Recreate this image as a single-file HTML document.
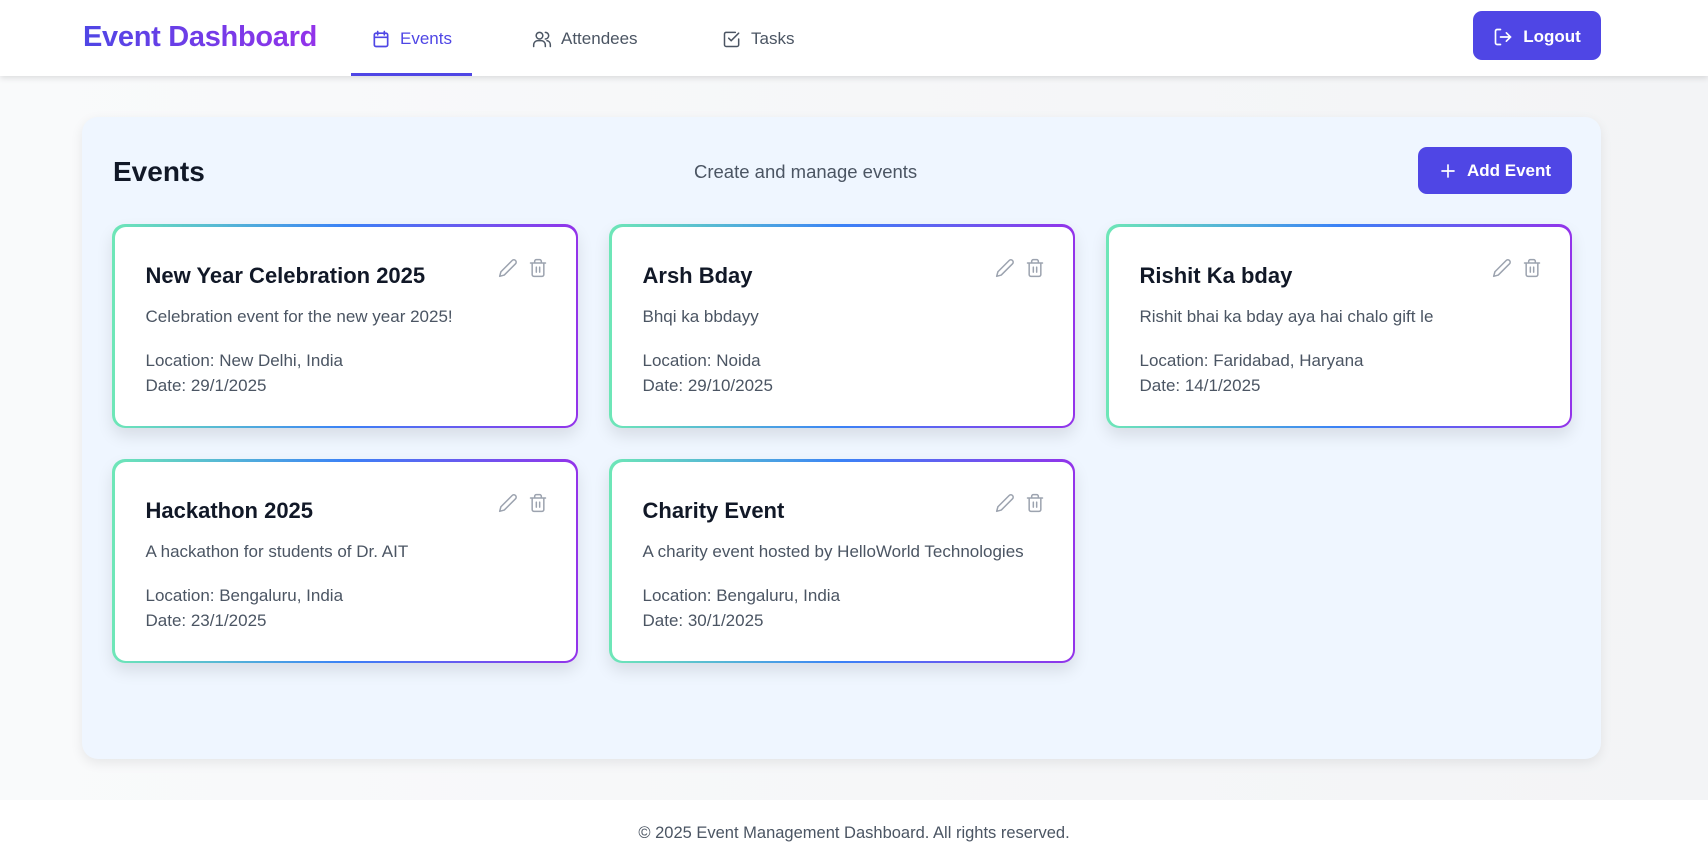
<!DOCTYPE html>
<html><head><meta charset="utf-8"><style>
*{box-sizing:border-box;margin:0;padding:0}
body{width:1708px;height:863px;overflow:hidden;font-family:"Liberation Sans",sans-serif;background:linear-gradient(90deg,#f9fafb,#f3f4f6);position:relative}
.hdr{position:absolute;left:0;top:0;width:1708px;height:76px;background:#fff;box-shadow:0 2px 6px rgba(0,0,0,.12);z-index:2}
.logo{position:absolute;left:83px;top:21px;font-size:29px;font-weight:bold;background:linear-gradient(90deg,#4f46e5,#9333ea);-webkit-background-clip:text;background-clip:text;color:transparent;letter-spacing:-.3px}
.nav{position:absolute;top:29px;font-size:17px;color:#4b5563;display:flex;align-items:center;gap:9px}
.nav svg{width:20px;height:20px}
.ul{position:absolute;left:351px;top:73px;width:121px;height:3px;background:#4f46e5}
.btn{position:absolute;background:#4f46e5;color:#fff;border-radius:9px;display:flex;align-items:center;justify-content:center;gap:10px;font-size:17px;font-weight:bold}
.main{position:absolute;left:82px;top:117px;width:1519px;height:642px;background:#eff6ff;border-radius:16px;box-shadow:0 4px 12px rgba(0,0,0,.08)}
h1{position:absolute;left:113px;top:156px;font-size:28px;color:#111827}
.sub{position:absolute;left:694px;top:161px;font-size:18.5px;color:#4b5563}
.card{position:absolute;width:466px;height:204px;border-radius:13px;padding:2.5px;background:linear-gradient(90deg,#6ee7b7,#3b82f6 50%,#9333ea);box-shadow:0 8px 16px rgba(0,0,0,.1)}
.in{width:100%;height:100%;background:#fff;border-radius:11px;position:relative}
.t{position:absolute;left:31px;top:36px;font-size:22px;font-weight:600;color:#111827}
.d{position:absolute;left:31px;top:80px;font-size:17px;color:#4b5563}
.l{position:absolute;left:31px;top:121px;font-size:17px;line-height:25px;color:#4b5563}
.ic{position:absolute;top:31px;width:20px;height:20px}
.foot{position:absolute;left:0;top:800px;width:1708px;height:63px;background:#fff;text-align:center;font-size:16.5px;color:#4b5563;padding-top:24px}
</style></head><body>
<div class="hdr">
<div class="logo">Event Dashboard</div>
<div class="nav" style="left:371px;color:#4f46e5"><svg viewBox="0 0 24 24" fill="none" stroke="#4f46e5" stroke-width="2" stroke-linecap="round"><rect x="4" y="5" width="16" height="16" rx="2"/><path d="M8 3v4M16 3v4M4 10h16"/></svg>Events</div>
<div class="nav" style="left:532px"><svg viewBox="0 0 24 24" fill="none" stroke="#4b5563" stroke-width="1.8" stroke-linecap="round"><circle cx="9" cy="8" r="4"/><path d="M2 21v-2a5 5 0 0 1 5-5h4a5 5 0 0 1 5 5v2M16 4a4 4 0 0 1 0 8M22 21v-2a5 5 0 0 0-4-5"/></svg>Attendees</div>
<div class="nav" style="left:722px"><svg viewBox="0 0 24 24" fill="none" stroke="#4b5563" stroke-width="1.8" stroke-linecap="round"><path d="M20 12v7a2 2 0 0 1-2 2H5a2 2 0 0 1-2-2V6a2 2 0 0 1 2-2h11"/><path d="M8 11l3 3 9-9"/></svg>Tasks</div>
<div class="ul"></div>
<div class="btn" style="left:1473px;top:11px;width:128px;height:49px;padding-top:3px"><svg width="20" height="20" viewBox="0 0 24 24" fill="none" stroke="#fff" stroke-width="2" stroke-linecap="round"><path d="M9 21H5a2 2 0 0 1-2-2V5a2 2 0 0 1 2-2h4M16 17l5-5-5-5M21 12H9"/></svg>Logout</div>
</div>
<div class="main"></div>
<h1>Events</h1>
<div class="sub">Create and manage events</div>
<div class="btn" style="left:1418px;top:147px;width:154px;height:47px"><svg width="18" height="18" viewBox="0 0 24 24" fill="none" stroke="#fff" stroke-width="2.2" stroke-linecap="round"><path d="M12 4v16M4 12h16"/></svg>Add Event</div>

<div class="card" style="left:112px;top:224px"><div class="in"><div class="t">New Year Celebration 2025</div><div class="d">Celebration event for the new year 2025!</div><div class="l">Location: New Delhi, India<br>Date: 29/1/2025</div>
<svg class="ic" style="left:383px" viewBox="0 0 24 24" fill="none" stroke="#9ca3af" stroke-width="1.8" stroke-linecap="round" stroke-linejoin="round"><path d="M17 3a2.8 2.8 0 0 1 4 4L7.5 20.5 2 22l1.5-5.5Z"/></svg><svg class="ic" style="left:413px" viewBox="0 0 24 24" fill="none" stroke="#9ca3af" stroke-width="1.8" stroke-linecap="round"><path d="M3 6h18M19 6v14a2 2 0 0 1-2 2H7a2 2 0 0 1-2-2V6M8 6V4a2 2 0 0 1 2-2h4a2 2 0 0 1 2 2v2M10 11v6M14 11v6"/></svg></div></div>

<div class="card" style="left:609px;top:224px"><div class="in"><div class="t">Arsh Bday</div><div class="d">Bhqi ka bbdayy</div><div class="l">Location: Noida<br>Date: 29/10/2025</div>
<svg class="ic" style="left:383px" viewBox="0 0 24 24" fill="none" stroke="#9ca3af" stroke-width="1.8" stroke-linecap="round" stroke-linejoin="round"><path d="M17 3a2.8 2.8 0 0 1 4 4L7.5 20.5 2 22l1.5-5.5Z"/></svg><svg class="ic" style="left:413px" viewBox="0 0 24 24" fill="none" stroke="#9ca3af" stroke-width="1.8" stroke-linecap="round"><path d="M3 6h18M19 6v14a2 2 0 0 1-2 2H7a2 2 0 0 1-2-2V6M8 6V4a2 2 0 0 1 2-2h4a2 2 0 0 1 2 2v2M10 11v6M14 11v6"/></svg></div></div>

<div class="card" style="left:1106px;top:224px"><div class="in"><div class="t">Rishit Ka bday</div><div class="d">Rishit bhai ka bday aya hai chalo gift le</div><div class="l">Location: Faridabad, Haryana<br>Date: 14/1/2025</div>
<svg class="ic" style="left:383px" viewBox="0 0 24 24" fill="none" stroke="#9ca3af" stroke-width="1.8" stroke-linecap="round" stroke-linejoin="round"><path d="M17 3a2.8 2.8 0 0 1 4 4L7.5 20.5 2 22l1.5-5.5Z"/></svg><svg class="ic" style="left:413px" viewBox="0 0 24 24" fill="none" stroke="#9ca3af" stroke-width="1.8" stroke-linecap="round"><path d="M3 6h18M19 6v14a2 2 0 0 1-2 2H7a2 2 0 0 1-2-2V6M8 6V4a2 2 0 0 1 2-2h4a2 2 0 0 1 2 2v2M10 11v6M14 11v6"/></svg></div></div>

<div class="card" style="left:112px;top:459px"><div class="in"><div class="t">Hackathon 2025</div><div class="d">A hackathon for students of Dr. AIT</div><div class="l">Location: Bengaluru, India<br>Date: 23/1/2025</div>
<svg class="ic" style="left:383px" viewBox="0 0 24 24" fill="none" stroke="#9ca3af" stroke-width="1.8" stroke-linecap="round" stroke-linejoin="round"><path d="M17 3a2.8 2.8 0 0 1 4 4L7.5 20.5 2 22l1.5-5.5Z"/></svg><svg class="ic" style="left:413px" viewBox="0 0 24 24" fill="none" stroke="#9ca3af" stroke-width="1.8" stroke-linecap="round"><path d="M3 6h18M19 6v14a2 2 0 0 1-2 2H7a2 2 0 0 1-2-2V6M8 6V4a2 2 0 0 1 2-2h4a2 2 0 0 1 2 2v2M10 11v6M14 11v6"/></svg></div></div>

<div class="card" style="left:609px;top:459px"><div class="in"><div class="t">Charity Event</div><div class="d">A charity event hosted by HelloWorld Technologies</div><div class="l">Location: Bengaluru, India<br>Date: 30/1/2025</div>
<svg class="ic" style="left:383px" viewBox="0 0 24 24" fill="none" stroke="#9ca3af" stroke-width="1.8" stroke-linecap="round" stroke-linejoin="round"><path d="M17 3a2.8 2.8 0 0 1 4 4L7.5 20.5 2 22l1.5-5.5Z"/></svg><svg class="ic" style="left:413px" viewBox="0 0 24 24" fill="none" stroke="#9ca3af" stroke-width="1.8" stroke-linecap="round"><path d="M3 6h18M19 6v14a2 2 0 0 1-2 2H7a2 2 0 0 1-2-2V6M8 6V4a2 2 0 0 1 2-2h4a2 2 0 0 1 2 2v2M10 11v6M14 11v6"/></svg></div></div>

<div class="foot">© 2025 Event Management Dashboard. All rights reserved.</div>
</body></html>
